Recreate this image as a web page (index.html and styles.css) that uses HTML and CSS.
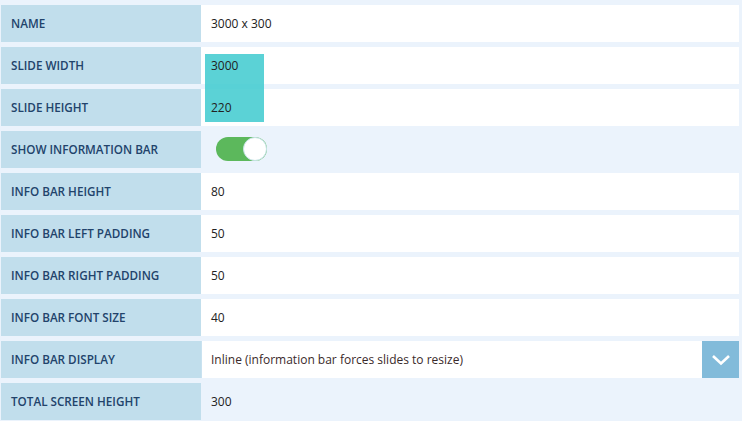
FILE: index.html
```html
<!DOCTYPE html>
<html>
<head>
<meta charset="utf-8">
<link rel="stylesheet" href="styles.css">
</head>
<body>
<div class="form">
  <div class="row"><div class="label">NAME</div><div class="value"><span class="txt">3000 x 300</span></div></div>
  <div class="row"><div class="label">SLIDE WIDTH</div><div class="value"><span class="txt">3000</span></div></div>
  <div class="row"><div class="label">SLIDE HEIGHT</div><div class="value"><span class="txt">220</span></div></div>
  <div class="row"><div class="label">SHOW INFORMATION BAR</div><div class="value plain"><span class="toggle"><span class="knob"></span></span></div></div>
  <div class="row"><div class="label">INFO BAR HEIGHT</div><div class="value"><span class="txt">80</span></div></div>
  <div class="row"><div class="label">INFO BAR LEFT PADDING</div><div class="value"><span class="txt">50</span></div></div>
  <div class="row"><div class="label">INFO BAR RIGHT PADDING</div><div class="value"><span class="txt">50</span></div></div>
  <div class="row"><div class="label">INFO BAR FONT SIZE</div><div class="value"><span class="txt">40</span></div></div>
  <div class="row"><div class="label">INFO BAR DISPLAY</div><div class="value select"><span class="txt sel-text">Inline (information bar forces slides to resize)</span><span class="sel-btn"><svg width="20" height="12" viewBox="0 0 20 12"><path d="M2 2 L10 9.5 L18 2" fill="none" stroke="#fff" stroke-width="2.6"/></svg></span></div></div>
  <div class="row"><div class="label">TOTAL SCREEN HEIGHT</div><div class="value plain"><span class="txt">300</span></div></div>
  <div class="highlight"></div>
</div>
</body>
</html>
```

FILE: styles.css
```css
html, body {
  margin: 0;
  padding: 0;
  background: #ebf3fc;
  font-family: "Open Sans", "Liberation Sans", sans-serif;
}
.form {
  position: relative;
  display: flex;
  flex-direction: column;
  gap: 5px;
  padding: 5px 3px 0 1px;
}
.row {
  display: flex;
  height: 37px;
}
.label {
  width: 200px;
  box-sizing: border-box;
  background: #c1deec;
  color: #22436b;
  font-size: 11.7px;
  font-weight: 600;
  padding-left: 10px;
  padding-bottom: 1px;
  display: flex;
  align-items: center;
}
.value {
  flex: 1;
  background: #fff;
  color: #222;
  font-size: 12px;
  padding-left: 10px;
  padding-bottom: 1px;
  display: flex;
  align-items: center;
}
.txt {
  position: relative;
  z-index: 2;
}
.value.plain {
  background: #ebf3fc;
}
.value.select {
  border-left: 1px solid #c9e2f0;
  padding-left: 9px;
  padding-bottom: 0;
  justify-content: space-between;
}
.sel-text {
  color: #3a2a2a;
}
.sel-btn {
  width: 37px;
  height: 37px;
  background: #82bbda;
  display: flex;
  align-items: center;
  justify-content: center;
}
.toggle {
  position: relative;
  display: block;
  width: 51px;
  height: 24px;
  margin-left: 5px;
  margin-top: -1px;
  border-radius: 12px;
  background: #5cb85c;
}
.knob {
  position: absolute;
  right: 0;
  top: 0;
  width: 24px;
  height: 24px;
  box-sizing: border-box;
  border-radius: 50%;
  background: #fff;
  border: 1px solid #c5e3e6;
}
.highlight {
  position: absolute;
  z-index: 1;
  left: 205px;
  top: 54px;
  width: 59px;
  height: 68px;
  background: rgba(64, 203, 207, 0.86);
}
```
